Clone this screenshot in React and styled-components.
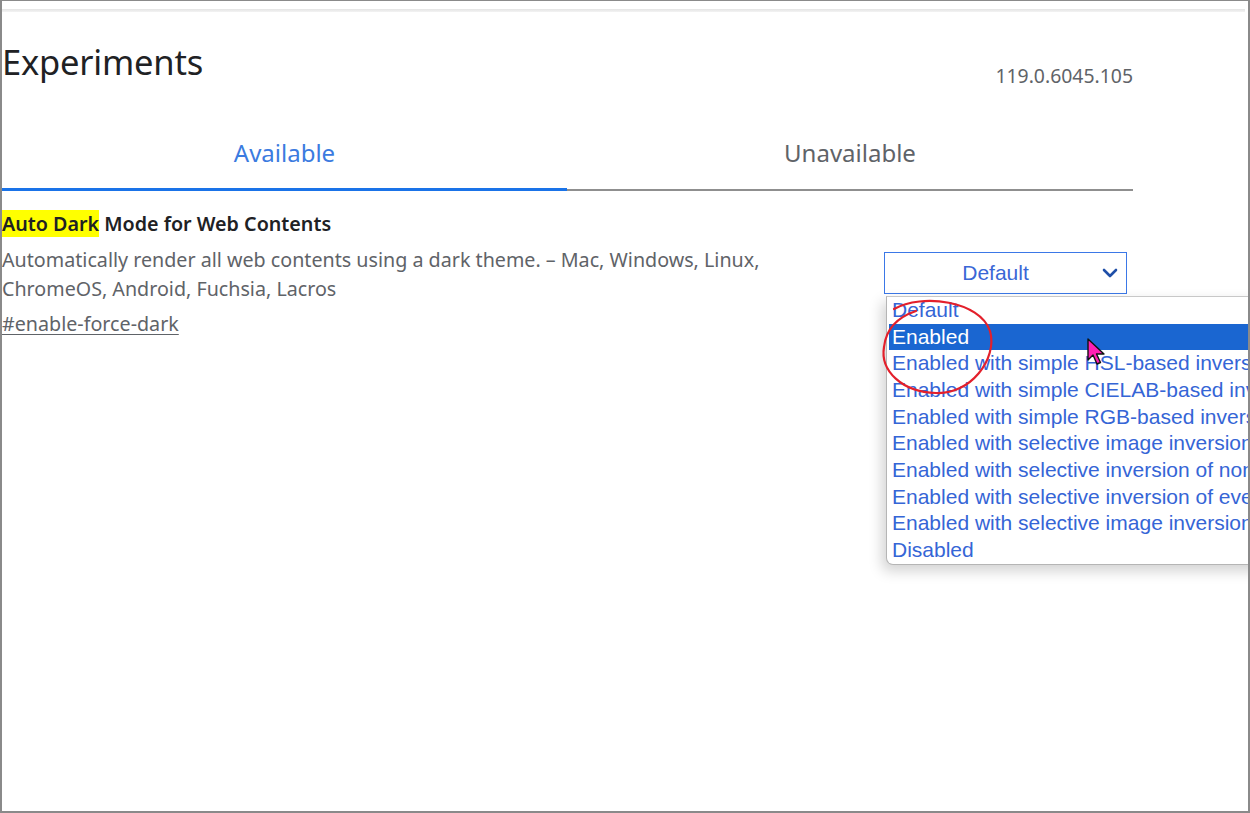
import React from "react";
import styled, { createGlobalStyle } from "styled-components";

const Global = createGlobalStyle`
  html, body { margin: 0; padding: 0; background: #fff; }
  body { font-family: "Noto Sans", "Open Sans", sans-serif; }
  * { box-sizing: border-box; }
`;

const Frame = styled.div`
  position: relative;
  width: 1250px;
  height: 813px;
  overflow: hidden;
  background: #fff;
  border-top: 1px solid #8a8a8a;
  border-left: 2px solid #8a8a8a;
  border-right: 2px solid #8a8a8a;
  border-bottom: 2px solid #8a8a8a;
`;

const TopShadow = styled.div`
  height: 3px;
  margin-top: 8px;
  margin-right: 3px;
  background: linear-gradient(#e4e4e4, #f3f3f3);
`;

const Page = styled.div`
  width: 1131px;
`;

const Header = styled.header`
  display: flex;
  justify-content: space-between;
  align-items: flex-start;
  height: 113px;
`;

const Title = styled.h1`
  margin: 28px 0 0 0;
  font-weight: 400;
  font-size: 34.5px;
  line-height: 44px;
  color: #202124;
  letter-spacing: -0.2px;
`;

const Version = styled.span`
  margin-top: 52px;
  font-size: 19.4px;
  line-height: 24px;
  color: #5f6368;
`;

const Tabs = styled.nav`
  display: grid;
  grid-template-columns: 565px 566px;
`;

const Tab = styled.div`
  height: 66px;
  display: flex;
  align-items: flex-start;
  justify-content: center;
  padding-top: 13px;
  font-size: 24px;
  line-height: 30px;
  color: ${(p) => (p.$active ? "#3b7be0" : "#5f6368")};
  border-bottom: ${(p) => (p.$active ? "3px solid #1a73e8" : "2px solid #8f8f8f")};
  margin-bottom: ${(p) => (p.$active ? "0" : "1px")};
`;

const Row = styled.section`
  display: flex;
  justify-content: space-between;
  padding-top: 19px;
`;

const Info = styled.div`
  width: 800px;
`;

const FlagName = styled.h2`
  margin: 0;
  font-size: 19.7px;
  font-weight: 600;
  line-height: 26px;
  color: #202124;
`;

const Mark = styled.mark`
  background: #ffff00;
  color: #202124;
  padding: 0;
`;

const Desc = styled.p`
  margin: 8px 0 0 0;
  font-size: 19.7px;
  line-height: 29px;
  color: #5f6368;
`;

const FlagLink = styled.a`
  display: inline-block;
  margin-top: 8px;
  font-size: 19.7px;
  line-height: 26px;
  color: #5f6368;
  text-decoration: underline;
  text-underline-offset: 3px;
`;

const SelectBox = styled.div`
  margin-top: 41px;
  margin-right: 6px;
  width: 243px;
  height: 42px;
  border: 1px solid #3b78e7;
  display: flex;
  align-items: center;
  padding: 0 8px 0 0;
  font-family: "Liberation Sans", Arial, sans-serif;
  font-size: 21px;
  color: #3a67d6;
`;

const SelectValue = styled.span`
  flex: 1;
  text-align: center;
  padding-left: 4px;
`;

const Chevron = styled.svg`
  width: 16px;
  height: 12px;
  display: block;
`;

const List = styled.ul`
  position: absolute;
  left: 884px;
  top: 295px;
  width: 420px;
  margin: 0;
  padding: 0;
  list-style: none;
  background: #fff;
  border: 1px solid #b5b5b5;
  border-top: 1px solid #c8c8c8;
  border-radius: 0 0 0 7px;
  box-shadow: -4px 6px 14px rgba(0, 0, 0, 0.18);
  font-family: "Liberation Sans", Arial, sans-serif;
  font-size: 21px;
  overflow: hidden;
`;

const Option = styled.li`
  height: 26.67px;
  line-height: 26.67px;
  white-space: nowrap;
  color: ${(p) => (p.$selected ? "#fff" : "#3565d6")};
  background: ${(p) => (p.$selected ? "#1a66d1" : "transparent")};
  margin: ${(p) => (p.$selected ? "0 0 0 2px" : "0")};
  padding-left: ${(p) => (p.$selected ? "3px" : "5px")};
`;

const Annotation = styled.svg`
  position: absolute;
  left: 870px;
  top: 296px;
  width: 140px;
  height: 110px;
  overflow: visible;
  pointer-events: none;
`;

const Cursor = styled.svg`
  position: absolute;
  left: 1085px;
  top: 337px;
  width: 22px;
  height: 30px;
  overflow: visible;
`;

const options = [
  "Default",
  "Enabled",
  "Enabled with simple HSL-based inversion",
  "Enabled with simple CIELAB-based inversion",
  "Enabled with simple RGB-based inversion",
  "Enabled with selective image inversion",
  "Enabled with selective inversion of non-image elements",
  "Enabled with selective inversion of everything",
  "Enabled with selective image inversion based on transparency",
  "Disabled",
];

export default function App() {
  return (
    <>
      <Global />
      <Frame>
        <TopShadow />
        <Page>
          <Header>
            <Title>Experiments</Title>
            <Version>119.0.6045.105</Version>
          </Header>
          <Tabs>
            <Tab $active>Available</Tab>
            <Tab>Unavailable</Tab>
          </Tabs>
          <Row>
            <Info>
              <FlagName>
                <Mark>Auto Dark</Mark> Mode for Web Contents
              </FlagName>
              <Desc>
                Automatically render all web contents using a dark theme. – Mac, Windows, Linux,
                <br />
                ChromeOS, Android, Fuchsia, Lacros
              </Desc>
              <FlagLink href="#enable-force-dark">#enable-force-dark</FlagLink>
            </Info>
            <SelectBox>
              <SelectValue>Default</SelectValue>
              <Chevron viewBox="0 0 16 12">
                <path d="M2 3 L8 9 L14 3" fill="none" stroke="#1f4fa8" strokeWidth="2.6" strokeLinecap="round" strokeLinejoin="round" />
              </Chevron>
            </SelectBox>
          </Row>
        </Page>
        <List>
          {options.map((o, i) => (
            <Option key={o} $selected={i === 1}>
              {o}
            </Option>
          ))}
        </List>
        <Annotation viewBox="0 0 140 110">
          <path
            d="M22 12 C 50 -4, 108 4, 118 34 C 126 62, 98 98, 64 96 C 30 95, 8 74, 12 50 C 14 32, 26 20, 44 14"
            fill="none"
            stroke="#e3202b"
            strokeWidth="2.2"
            strokeLinecap="round"
          />
        </Annotation>
        <Cursor viewBox="0 0 22 30">
          <path
            d="M1 1 L1 22 L6 17 L10 26 L13.5 24.5 L9.5 16 L17 16 Z"
            fill="#ff1fb4"
            stroke="#111"
            strokeWidth="1.4"
            strokeLinejoin="round"
          />
        </Cursor>
      </Frame>
    </>
  );
}
